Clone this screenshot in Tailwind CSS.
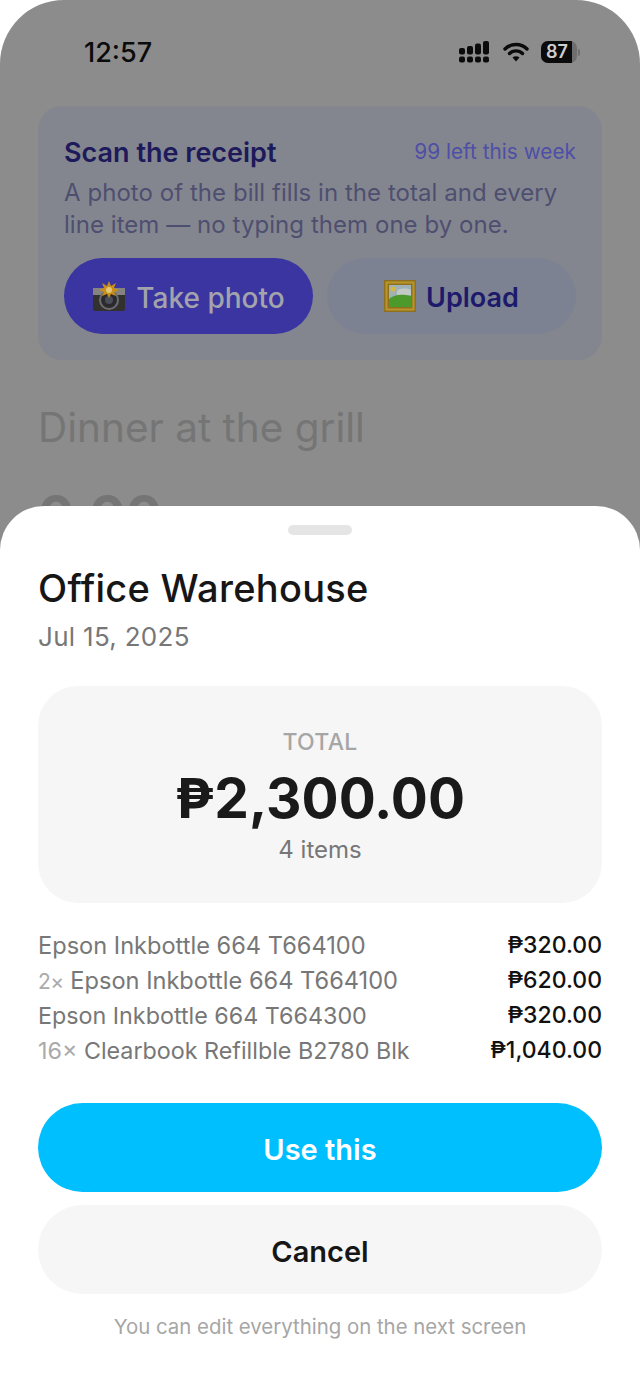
<!DOCTYPE html>
<html lang="en">
<head>
    <meta charset="UTF-8">
    <title>Receipt preview</title>
    <script src="https://cdn.jsdelivr.net/npm/@tailwindcss/browser@4"></script>
</head>
<body class="bg-white">
    <div class="relative w-[640px] h-[1391px] overflow-hidden bg-white font-['Inter',sans-serif]">
        <!-- Dimmed page behind the sheet -->
        <div class="h-full rounded-t-[64px] bg-[#8c8c8c]">
            <!-- Status bar -->
            <div class="flex items-center justify-between h-[106px] pl-[84px] pr-[60px] pb-[2px]">
                <span class="pt-[2px] text-[27px] font-medium text-[#0b0b0b]">12:57</span>
                <div class="flex items-center gap-[12px]">
                    <svg class="mr-[1px]" width="31" height="22" viewBox="0 0 31 22" fill="#0b0b0b">
                        <rect x="0" y="7" width="6" height="6.500" rx="2"/>
                        <rect x="8" y="5" width="6" height="8.500" rx="2"/>
                        <rect x="16" y="2.500" width="6" height="11" rx="2"/>
                        <rect x="24" y="0" width="6" height="13.500" rx="2"/>
                        <rect x="0" y="15.500" width="6" height="6" rx="2"/>
                        <rect x="8" y="15.500" width="6" height="6" rx="2"/>
                        <rect x="16" y="15.500" width="6" height="6" rx="2"/>
                        <rect x="24" y="15.500" width="6" height="6" rx="2"/>
                    </svg>
                    <svg width="26" height="22" viewBox="0 0 26 22" fill="none" stroke="#0b0b0b" stroke-width="3.400" stroke-linecap="round">
                        <path d="M2 8C8 2 18 2 24 8"/>
                        <path d="M6.500 12.500C10 9 16 9 19.500 12.500"/>
                        <path d="M9.500 16.500L13 20.500L16.500 16.500C14.500 14.800 11.500 14.800 9.500 16.500Z" fill="#0b0b0b" stroke="none"/>
                    </svg>
                    <div class="flex items-center gap-[1px]">
                        <div class="relative w-[36px] h-[22px] rounded-[7px] bg-[#6e6e6e]">
                            <div class="w-[31px] h-full rounded-l-[7px] bg-[#0b0b0b]"></div>
                            <span class="absolute inset-0 flex items-center justify-center pr-[4px] text-[18px] leading-[22px] font-semibold text-[#cfcfcf]">87</span>
                        </div>
                        <div class="w-[2px] h-[7px] rounded-r-full bg-[#6e6e6e]"></div>
                    </div>
                </div>
            </div>

            <div class="px-[38px]">
                <!-- Scan card -->
                <div class="h-[254px] rounded-[24px] bg-[#84868f] px-[26px] pt-[28px]">
                    <div class="flex items-center justify-between h-[36px]">
                        <h2 class="pt-[2px] text-[27px] font-semibold text-[#1d1a5c]">Scan the receipt</h2>
                        <span class="text-[20.800px] text-[#4e4fa6]">99 left this week</span>
                    </div>
                    <p class="mt-[7px] text-[24px] leading-[32px] tracking-[0.050px] text-[#4e4f70]">A photo of the bill fills in the total and every line item — no typing them one by one.</p>
                    <div class="grid grid-cols-2 gap-[14px] mt-[17px]">
                        <div class="flex items-center justify-center gap-[10px] h-[76px] rounded-full bg-[#3a35a0] text-[28px] font-medium text-[#a3a3ab]">
                            <svg width="34" height="30" viewBox="0 0 34 30">
                                <rect x="1" y="7" width="32" height="23" rx="2" fill="#33312e"/>
                                <rect x="1" y="7" width="32" height="7" fill="#85837f"/>
                                <circle cx="17" cy="19" r="9" fill="#2a2a2e" stroke="#6d6d70" stroke-width="2"/>
                                <circle cx="17" cy="19" r="4" fill="#4a4c57"/>
                                <path d="M17 0L19 5L24 2L22 7L27 9L22 11L24 15L19 13L17 17L15 13L10 15L12 11L7 9L12 7L10 2L15 5Z" fill="#c98f18"/>
                                <circle cx="17" cy="9" r="3" fill="#e3c677"/>
                            </svg>
                            <span class="pt-[4px]">Take photo</span>
                        </div>
                        <div class="flex items-center justify-center gap-[10px] h-[76px] rounded-full bg-[#7d8292] text-[27px] font-semibold text-[#1d1a6c]">
                            <svg width="32" height="32" viewBox="0 0 32 32">
                                <rect width="32" height="32" fill="#8e701f"/>
                                <rect x="2.500" y="2.500" width="27" height="27" fill="none" stroke="#b9962b" stroke-width="2"/>
                                <rect x="5" y="5" width="22" height="22" fill="#9eb2b5"/>
                                <path d="M13 11C16 8 22 8 27 10V15H13Z" fill="#c3c9c4"/>
                                <path d="M5 19C11 14 18 14 27 16V27H5Z" fill="#4c9a2c"/>
                                <circle cx="9" cy="9" r="2.500" fill="#d9b83f"/>
                            </svg>
                            <span class="pt-[4px]">Upload</span>
                        </div>
                    </div>
                </div>

                <!-- Form fields, mostly hidden by the sheet -->
                <p class="mt-[43px] text-[40.500px] leading-[50px] text-[#757575]">Dinner at the grill</p>
                <p class="mt-[26px] text-[54px] leading-[72px] font-bold text-[#757575]">0.00</p>
            </div>
        </div>

        <!-- Bottom sheet -->
        <div class="absolute inset-x-0 bottom-0 h-[885px] rounded-t-[44px] bg-white px-[38px]">
            <div class="mx-auto mt-[19px] w-[64px] h-[10px] rounded-full bg-[#e5e5e5]"></div>
            <h1 class="mt-[28px] text-[38px] leading-[50px] tracking-[0.300px] font-medium text-[#161616]">Office Warehouse</h1>
            <p class="mt-[8px] text-[26px] leading-[32px] tracking-[0.300px] text-[#777777]">Jul 15, 2025</p>

            <!-- Total box -->
            <div class="flex flex-col items-center mt-[33px] h-[217px] rounded-[40px] bg-[#f6f6f6] pt-[41px]">
                <span class="text-[23px] leading-[30px] tracking-[0.300px] font-medium text-[#a6a6a6]">TOTAL</span>
                <span class="mt-[11px] text-[55px] leading-[60px] font-bold text-[#1a1a1a]">₱2,300.00</span>
                <span class="mt-[6px] text-[24px] leading-[32px] text-[#777777]">4 items</span>
            </div>

            <!-- Line items -->
            <div class="mt-[25px] text-[23px] leading-[35px]">
                <div class="flex items-center justify-between h-[35px]">
                    <span class="text-[23.600px] text-[#777777]">Epson Inkbottle 664 T664100</span>
                    <span class="font-medium text-[#111111]">₱320.00</span>
                </div>
                <div class="flex items-center justify-between h-[35px]">
                    <span class="text-[23.600px] text-[#777777]"><span class="text-[21px] tracking-[-0.500px] text-[#aaaaaa]">2×</span> Epson Inkbottle 664 T664100</span>
                    <span class="font-medium text-[#111111]">₱620.00</span>
                </div>
                <div class="flex items-center justify-between h-[35px]">
                    <span class="text-[23.300px] text-[#777777]">Epson Inkbottle 664 T664300</span>
                    <span class="font-medium text-[#111111]">₱320.00</span>
                </div>
                <div class="flex items-center justify-between h-[35px]">
                    <span class="text-[23.300px] text-[#777777]"><span class="text-[#aaaaaa]">16×</span> Clearbook Refillble B2780 Blk</span>
                    <span class="font-medium text-[#111111]">₱1,040.00</span>
                </div>
            </div>

            <!-- Actions -->
            <div class="flex items-center justify-center mt-[35px] h-[89px] pt-[5px] rounded-full bg-[#00bfff] text-[29px] font-semibold text-white">Use this</div>
            <div class="flex items-center justify-center mt-[13px] h-[89px] pt-[5px] rounded-full bg-[#f6f6f6] text-[29px] font-semibold text-[#161616]">Cancel</div>
            <p class="mt-[19px] text-center text-[20.400px] leading-[28px] text-[#a6a6a6]">You can edit everything on the next screen</p>
        </div>
    </div>
</body>
</html>
